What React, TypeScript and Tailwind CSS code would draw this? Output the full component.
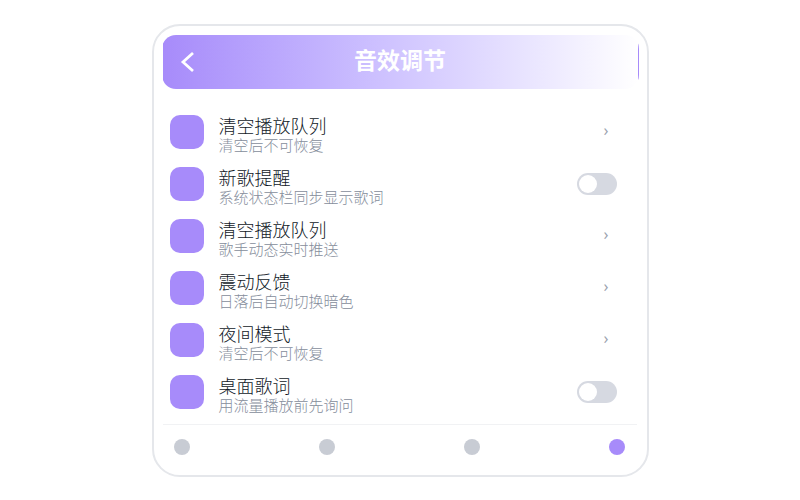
import { useState } from "react";
import { clsx } from "clsx";

type Setting = {
  title: string;
  desc: string;
  kind: "link" | "switch";
};

const settings: Setting[] = [
  { title: "清空播放队列", desc: "清空后不可恢复", kind: "link" },
  { title: "新歌提醒", desc: "系统状态栏同步显示歌词", kind: "switch" },
  { title: "清空播放队列", desc: "歌手动态实时推送", kind: "link" },
  { title: "震动反馈", desc: "日落后自动切换暗色", kind: "link" },
  { title: "夜间模式", desc: "清空后不可恢复", kind: "link" },
  { title: "桌面歌词", desc: "用流量播放前先询问", kind: "switch" },
];

const tabs = ["首页", "发现", "歌单", "我的"];

function Header() {
  return (
    <header className="grid h-[54px] grid-cols-[1fr_auto_1fr] items-center rounded-[14px] border border-transparent bg-linear-to-r from-[#a78bfa] to-white px-[17px] text-white">
      <button type="button" aria-label="返回" className="w-4">
        <svg width="16" height="22" viewBox="0 0 16 22" fill="none" aria-hidden>
          <path d="M13 2 3 11l10 9" stroke="currentColor" strokeWidth="2.8" />
        </svg>
      </button>
      <h1 className="pb-1.5 text-[23px] leading-8 font-bold">音效调节</h1>
    </header>
  );
}

function Switch({ label }: { label: string }) {
  const [on, setOn] = useState(false);

  return (
    <input
      type="checkbox"
      role="switch"
      aria-label={label}
      checked={on}
      onChange={(e) => setOn(e.target.checked)}
      className="h-[22px] w-10 cursor-pointer appearance-none rounded-full bg-[#d6d9e1] p-0.5 before:block before:size-[18px] before:rounded-full before:bg-white before:transition-transform checked:bg-[#a78bfa] checked:before:translate-x-[18px]"
    />
  );
}

function SettingRow({ title, desc, kind }: Setting) {
  return (
    <li className="flex min-h-11 items-start gap-[15px]">
      <span aria-hidden className="size-[34px] shrink-0 rounded-[10px] bg-[#a78bfa]" />
      <div className="min-w-0 flex-1">
        <p className="text-lg leading-5 text-[#111827]">{title}</p>
        <p className="text-[15px] leading-5 text-[#858d9b]">{desc}</p>
      </div>
      <div className="flex h-[34px] items-center">
        {kind === "switch" ? (
          <Switch label={title} />
        ) : (
          <a
            href="#"
            aria-label={title}
            className="px-2 pb-1 font-['Noto_Sans',sans-serif] text-base leading-5 font-normal text-[#9ca3af]"
          >
            ›
          </a>
        )}
      </div>
    </li>
  );
}

function TabBar() {
  const [active, setActive] = useState(3);

  return (
    <nav className="mt-[5px] mr-0.5 ml-px flex justify-between border-t border-[#f1f2f4] px-[11px] pt-[14px] pb-5">
      {tabs.map((tab, i) => (
        <button
          key={tab}
          type="button"
          aria-label={tab}
          aria-current={active === i ? "page" : undefined}
          onClick={() => setActive(i)}
          className={clsx("size-4 rounded-full", active === i ? "bg-[#a78bfa]" : "bg-[#c8ccd4]")}
        />
      ))}
    </nav>
  );
}

export default function App() {
  return (
    <div className="flex min-h-screen items-center justify-center bg-white font-['Noto_Sans_CJK_SC',sans-serif] font-light">
      <main className="w-full max-w-[497px] rounded-[28px] border-2 border-[#e5e7eb] bg-white px-2 pt-[9px]">
        <Header />
        <ul className="mt-[26px] flex flex-col gap-2 pr-[22px] pl-2">
          {settings.map((s, i) => (
            <SettingRow key={i} {...s} />
          ))}
        </ul>
        <TabBar />
      </main>
    </div>
  );
}
